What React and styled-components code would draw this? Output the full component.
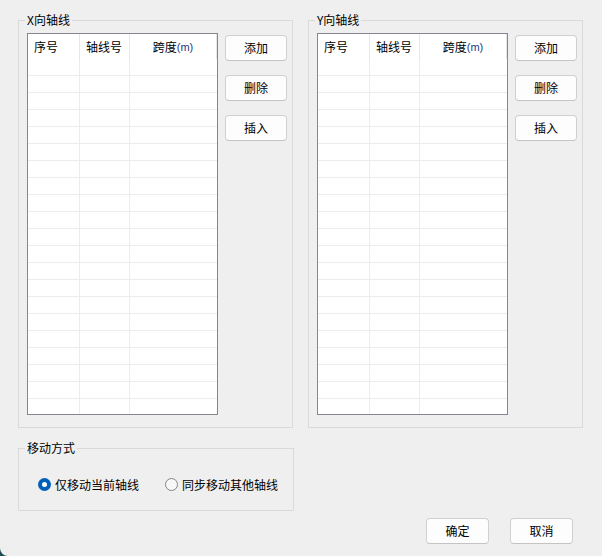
import React from 'react';
import styled, { createGlobalStyle } from 'styled-components';

const GlobalStyle = createGlobalStyle`
  html, body {
    margin: 0;
    padding: 0;
    background: #1f4d57;
  }
  * {
    box-sizing: border-box;
  }
`

const Dialog = styled.div`
  width: 602px;
  height: 556px;
  background: #efefef;
  border-bottom-left-radius: 8px;
  padding: 12px 0 0 18px;
  font-family: "Noto Sans CJK SC", "Noto Sans", sans-serif;
  font-size: 12px;
  color: #000;
  display: flex;
  flex-direction: column;
`

const TopRow = styled.div`
  display: flex;
  gap: 15px;
  height: 416px;
`

const GroupBox = styled.fieldset`
  margin: 0;
  min-width: 0;
  width: ${p => p.$width}px;
  border: 1px solid #dadada;
  padding: ${p => p.$padding};
`

const BottomGroup = styled(GroupBox)`
  margin-top: 12px;
`

const Legend = styled.legend`
  font-size: 12px;
  line-height: 16px;
  padding: 0 2px;
  margin-left: -2px;
`

const GroupInner = styled.div`
  display: flex;
  align-items: flex-start;
`

const ListView = styled.div`
  width: 192px;
  height: 382px;
  border: 1px solid #838790;
  background: #fff;
  overflow: hidden;
`

const Row = styled.div`
  display: grid;
  grid-template-columns: 52px 50px 87px;
  height: ${p => (p.$header ? 25 : 17)}px;
  border-bottom: ${p => (p.$header ? 'none' : '1px solid #ececec')};
`

const HeaderCell = styled.div`
  border-right: 1px solid #e6e6e6;
  display: flex;
  align-items: center;
  justify-content: ${p => (p.$center ? 'center' : 'flex-start')};
  padding-left: ${p => (p.$center ? 0 : 6)}px;
  line-height: 16px;
  padding-top: 1px;
`

const Unit = styled.span`
  color: #1f3b7c;
  font-family: "Liberation Sans", Arial, sans-serif;
  font-size: 11px;
`

const Cell = styled.div`
  border-right: ${p => (p.$last ? 'none' : '1px solid #ececec')};
`

const ButtonColumn = styled.div`
  display: flex;
  flex-direction: column;
  gap: 14px;
  margin-left: 7px;
  padding-top: 2px;
`

const Button = styled.button`
  width: ${p => p.$width || 62}px;
  height: 26px;
  padding: 0;
  background: #fdfdfd;
  border: 1px solid #d0d0d0;
  border-bottom-color: #c4c4c4;
  border-radius: 4px;
  font-family: "Noto Sans CJK SC", "Noto Sans", sans-serif;
  font-size: 12px;
  color: #000;
  line-height: 16px;
`

const RadioRow = styled.div`
  display: flex;
  align-items: center;
  height: 16px;
  margin-left: 11px;
`

const RadioLabel = styled.label`
  display: flex;
  align-items: center;
  gap: 4px;
  margin-right: ${p => p.$gap || 0}px;
`

const RadioMark = styled.span`
  width: 13px;
  height: 13px;
  border-radius: 50%;
  display: flex;
  align-items: center;
  justify-content: center;
  background: ${p => (p.$checked ? '#005fb8' : '#f7f7f7')};
  border: ${p => (p.$checked ? 'none' : '1px solid #868686')};
  &::after {
    content: '';
    width: 5px;
    height: 5px;
    border-radius: 50%;
    background: #fff;
    display: ${p => (p.$checked ? 'block' : 'none')};
  }
`

const Footer = styled.div`
  display: flex;
  justify-content: flex-end;
  gap: 21px;
  padding: 7px 29px 0 0;
`

const AxisGroup = ({ title }) => {
  const rows = Array.from({ length: 21 })
  return (
    <GroupBox $width={275} $padding="5px 5px 0 8px">
      <Legend>{title}</Legend>
      <GroupInner>
        <ListView>
          <Row $header>
            <HeaderCell>序号</HeaderCell>
            <HeaderCell>轴线号</HeaderCell>
            <HeaderCell $center>跨度<Unit>(m)</Unit></HeaderCell>
          </Row>
          {rows.map((_, i) => (
            <Row key={i}>
              <Cell />
              <Cell />
              <Cell $last />
            </Row>
          ))}
        </ListView>
        <ButtonColumn>
          <Button>添加</Button>
          <Button>删除</Button>
          <Button>插入</Button>
        </ButtonColumn>
      </GroupInner>
    </GroupBox>
  )
}

export default function App() {
  return (
    <>
      <GlobalStyle />
      <Dialog>
        <TopRow>
          <AxisGroup title="X向轴线" />
          <AxisGroup title="Y向轴线" />
        </TopRow>
        <BottomGroup $width={276} $padding="20px 8px 18px 8px">
          <Legend>移动方式</Legend>
          <RadioRow>
            <RadioLabel $gap={26}>
              <RadioMark $checked />
              仅移动当前轴线
            </RadioLabel>
            <RadioLabel>
              <RadioMark />
              同步移动其他轴线
            </RadioLabel>
          </RadioRow>
        </BottomGroup>
        <Footer>
          <Button $width={63}>确定</Button>
          <Button $width={63}>取消</Button>
        </Footer>
      </Dialog>
    </>
  )
}
